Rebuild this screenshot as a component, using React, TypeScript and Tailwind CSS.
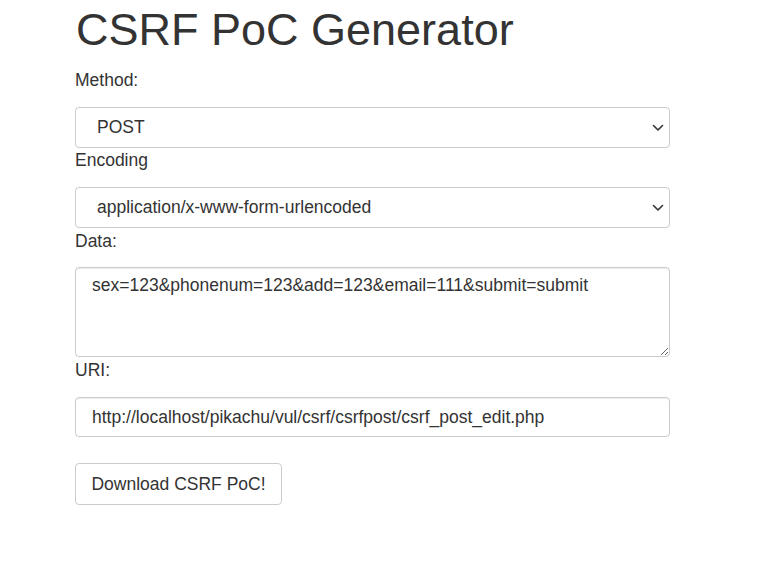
import React from "react";

function Chevron() {
  return (
    <svg
      className="pointer-events-none absolute right-[6px] top-1/2 -translate-y-1/2"
      width="12"
      height="8"
      viewBox="0 0 12 8"
      fill="none"
    >
      <path d="M1.5 1.5 L6 6 L10.5 1.5" stroke="#333" strokeWidth="1.6" strokeLinecap="round" strokeLinejoin="round" />
    </svg>
  );
}

export default function App() {
  const font = { fontFamily: '"Liberation Sans", Arial, sans-serif' };
  return (
    <div className="min-h-[567px] w-full bg-white text-[#333]" style={font}>
      <div className="pl-[75px] pt-[5px] w-[670px]">
        <h1 className="text-[45px] leading-[50px] font-normal text-[#333] m-0 ml-[1px]">CSRF PoC Generator</h1>

        <label className="block text-[17.5px] leading-[20px] mt-[15px] mb-[17px]">Method:</label>
        <div className="relative w-[595px]">
          <select
            defaultValue="POST"
            className="block w-full h-[41px] appearance-none rounded-[4px] border border-[#ccc] bg-white pl-[21px] pr-[30px] text-[17.5px] text-[#333] outline-none"
            style={font}
          >
            <option>POST</option>
            <option>GET</option>
          </select>
          <Chevron />
        </div>

        <label className="block text-[17.5px] leading-[20px] mt-[2px] mb-[17px]">Encoding</label>
        <div className="relative w-[595px]">
          <select
            defaultValue="application/x-www-form-urlencoded"
            className="block w-full h-[41px] appearance-none rounded-[4px] border border-[#ccc] bg-white pl-[21px] pr-[30px] text-[17.5px] text-[#333] outline-none"
            style={font}
          >
            <option>application/x-www-form-urlencoded</option>
            <option>multipart/form-data</option>
            <option>text/plain</option>
          </select>
          <Chevron />
        </div>

        <label className="block text-[17.5px] leading-[20px] mt-[3px] mb-[16px]">Data:</label>
        <textarea
          defaultValue="sex=123&phonenum=123&add=123&email=111&submit=submit"
          className="block w-[595px] h-[90px] rounded-[4px] border border-[#ccc] bg-white pl-[16px] pr-[12px] pt-[5px] text-[17.5px] leading-[25px] text-[#333] outline-none shadow-[inset_0_1px_1px_rgba(0,0,0,0.075)]"
          style={font}
        />

        <label className="block text-[17.5px] leading-[20px] mt-[3px] mb-[17px]">URI:</label>
        <input
          type="text"
          defaultValue="http://localhost/pikachu/vul/csrf/csrfpost/csrf_post_edit.php"
          className="block w-[595px] h-[40px] rounded-[4px] border border-[#ccc] bg-white pl-[16px] pr-[12px] text-[17.5px] text-[#333] outline-none shadow-[inset_0_1px_1px_rgba(0,0,0,0.075)]"
          style={font}
        />

        <button
          type="button"
          className="mt-[26px] block w-[207px] h-[42px] rounded-[4px] border border-[#ccc] bg-white text-[17.5px] text-[#333] text-center"
          style={font}
        >
          Download CSRF PoC!
        </button>
      </div>
    </div>
  );
}
